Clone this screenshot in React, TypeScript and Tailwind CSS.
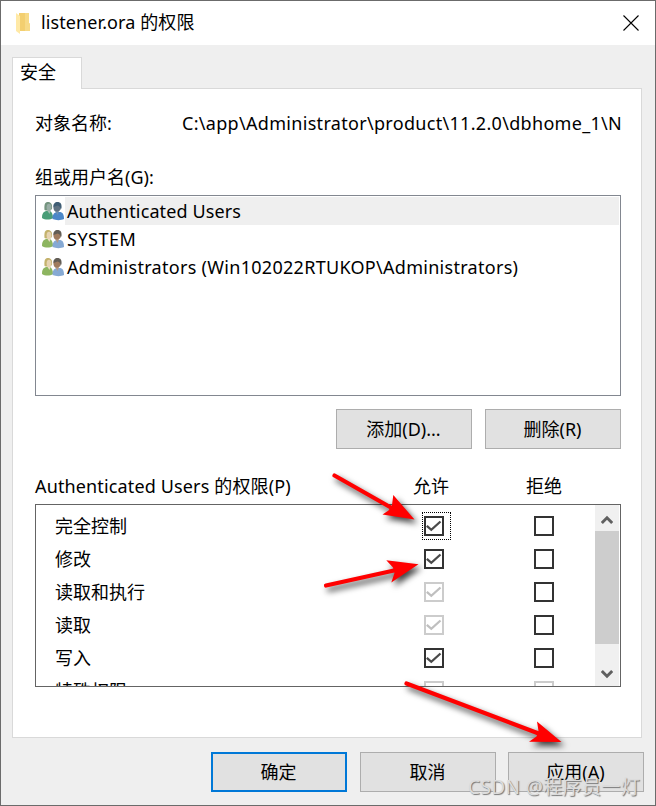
import { useState } from "react";

interface Permission {
  name: string;
  allow: boolean;
  inherited?: boolean;
  denyDisabled?: boolean;
}

const GROUPS = [
  { name: "Authenticated Users", spacing: "tracking-[0.12px]" },
  { name: "SYSTEM", spacing: "tracking-[0.5px]" },
  { name: "Administrators (Win102022RTUKOP\\Administrators)", spacing: "tracking-[0.29px]" },
];

const PERMISSIONS: Permission[] = [
  { name: "完全控制", allow: true },
  { name: "修改", allow: true },
  { name: "读取和执行", allow: true, inherited: true },
  { name: "读取", allow: true, inherited: true },
  { name: "写入", allow: true },
  { name: "特殊权限", allow: false, inherited: true, denyDisabled: true },
];

function FolderIcon() {
  return (
    <svg width="16" height="22" viewBox="0 0 16 22" className="shrink-0">
      <path d="M4 1h10v10l1 1v7H4z" fill="#f3cf70" />
      <path d="M10 1h4v10l1 1v7h-5z" fill="#f7da87" />
      <path d="M1 1l4 3v18l-4-3z" fill="#ffe9a6" />
    </svg>
  );
}

function UsersIcon({ selected }: { selected?: boolean }) {
  return (
    <svg width="22" height="20" viewBox="0 0 22 20" className="shrink-0">
      <path d="M0 17c0-4 1-6 4-7h4c2 1 3 4 3 7-3 2-8 2-11 0z" fill={selected ? "#4a9d78" : "#8db560"} />
      <path d="M2.500 9C2 3 3 1 6 1s4.500 2 4 7l-2 1.500H4z" fill={selected ? "#74947f" : "#c4b26c"} />
      <ellipse cx="7" cy="6.500" rx="2.400" ry="3.700" fill={selected ? "#9aaea6" : "#e6d3b2"} />
      <path d="M5.500 10h3l-1 3z" fill={selected ? "#a4bdb0" : "#ecdfc4"} />
      <path d="M10.500 18c0-4 1-6 4-7h4c3 1 3.500 4 3.500 7-3 1.500-8 1.500-11.500 0z" fill={selected ? "#4a87c8" : "#86a9d3"} />
      <ellipse cx="15" cy="6.500" rx="3.600" ry="4.700" fill={selected ? "#5f7282" : "#a07b5e"} />
      <path d="M11.500 6C11 3 13 1 15.500 1c3 0 4.500 2 4 6l-1 2c0-3-1-4-3-4.500z" fill={selected ? "#3f5d74" : "#625d55"} />
      <path d="M13.500 10.500h3.500l-1.500 3.500z" fill={selected ? "#6e91b0" : "#b59a86"} />
    </svg>
  );
}

interface CheckProps {
  checked: boolean;
  disabled?: boolean;
  focused?: boolean;
  onToggle: () => void;
}

function Check({ checked, disabled, focused, onToggle }: CheckProps) {
  return (
    <button
      type="button"
      role="checkbox"
      aria-checked={checked}
      disabled={disabled}
      onClick={onToggle}
      className={
        disabled
          ? "relative block h-5 w-5 border-2 border-[#cccccc] bg-white text-[#bfbfbf]"
          : "relative block h-5 w-5 border-2 border-[#333333] bg-white text-[#4a4a4a]"
      }
    >
      {checked && (
        <svg width="16" height="16" viewBox="0 0 16 16" fill="none" stroke="currentColor" strokeWidth="2.300">
          <path d="M0.800 7.800L5.300 11.800L14.500 3.500" />
        </svg>
      )}
      {focused && <span className="absolute -top-[6px] -left-1 h-7 w-[29px] border border-dotted border-black" />}
    </button>
  );
}

function DialogButton({ label, primary }: { label: string; primary?: boolean }) {
  return (
    <button
      type="button"
      className={
        primary
          ? "h-10 w-[136px] border-2 border-[#0078d7] bg-[#e1e1e1] pr-px"
          : "h-10 w-[136px] border border-[#adadad] bg-[#e1e1e1] pr-px"
      }
    >
      {label}
    </button>
  );
}

function Chevron({ up }: { up?: boolean }) {
  return (
    <svg width="12" height="10" viewBox="0 0 12 10" fill="none" stroke="#606060" strokeWidth="3">
      <path d={up ? "M0.800 8L6 2.800L11.200 8" : "M0.800 2L6 7.200L11.200 2"} />
    </svg>
  );
}

function Arrows() {
  return (
    <svg width="656" height="806" viewBox="0 0 656 806" className="pointer-events-none absolute -top-px -left-px drop-shadow-[3px_4px_3px_rgba(0,0,0,0.75)]">
      <g stroke="#ff0000" strokeWidth="4.200" strokeLinecap="round">
        <path d="M334.500 475.500L390 507" />
        <path d="M326 585.500L394 570.500" />
        <path d="M406.500 683.500L540 734" />
      </g>
      <g fill="#ff0000">
        <path d="M414.500 519.500L393.300 495L392 505L388.500 510.500L382.500 514.500Z" />
        <path d="M418.500 564.300L386.300 560.300L393 567.500L394.500 573L391.300 582.500Z" />
        <path d="M561.500 742L537 721.500L538.500 731L536.500 736.500L529 741.700Z" />
      </g>
    </svg>
  );
}

export default function App() {
  const [permissions, setPermissions] = useState(PERMISSIONS);
  const [denied, setDenied] = useState<string[]>([]);

  function toggleAllow(name: string) {
    setPermissions((list) => list.map((p) => (p.name === name ? { ...p, allow: !p.allow } : p)));
  }

  function toggleDeny(name: string) {
    setDenied((list) => (list.includes(name) ? list.filter((n) => n !== name) : [...list, name]));
  }

  return (
    <div className="relative flex h-[806px] w-[656px] flex-col overflow-hidden border border-[#6b6b6b] bg-[#efefef] font-['Noto_Sans','Noto_Sans_CJK_SC',sans-serif] text-[18px] leading-7 font-normal text-black">
      <header className="flex h-11 shrink-0 items-center bg-white pr-4 pl-[14px]">
        <FolderIcon />
        <h1 className="ml-[10px] flex-1 pb-[2px] tracking-[0.1px] whitespace-pre">listener.ora 的权限</h1>
        <button type="button" aria-label="关闭" className="pb-px">
          <svg width="16" height="16" viewBox="0 0 16 16" stroke="#000000" strokeWidth="1.100">
            <path d="M0.500 0.500L15.500 15.500M15.500 0.500L0.500 15.500" />
          </svg>
        </button>
      </header>

      <main className="flex flex-col px-[11px] pt-3">
        <div className="z-10 -mb-px h-8 w-[70px] border border-b-0 border-[#d9d9d9] bg-white pl-[7px] leading-[29px]">安全</div>

        <section className="flex h-[650px] w-[630px] flex-col border border-[#d9d9d9] bg-white px-[22px] pt-5">
          <div className="flex whitespace-pre">
            <span className="w-[147px] shrink-0">对象名称:</span>
            <span className="tracking-[0.31px]">{"C:\\app\\Administrator\\product\\11.2.0\\dbhome_1\\N"}</span>
          </div>

          <div className="mt-[26px]">组或用户名(G):</div>
          <ul className="mt-1 h-[201px] w-[586px] border border-[#828790] pt-px pr-px pl-[6px]">
            {GROUPS.map((group, i) => (
              <li key={group.name} className="flex h-7 items-center">
                <UsersIcon selected={i === 0} />
                <span className={i === 0 ? "ml-px flex-1 bg-[#efefef] pl-[2px]" : "ml-px flex-1 pl-[2px]"}>
                  <span className={group.spacing}>{group.name}</span>
                </span>
              </li>
            ))}
          </ul>

          <div className="mt-[13px] flex w-[586px] justify-end gap-[13px]">
            <DialogButton label="添加(D)..." />
            <DialogButton label="删除(R)" />
          </div>

          <div className="mt-[23px] flex">
            <span className="w-[378px] tracking-[0.14px] whitespace-pre">Authenticated Users 的权限(P)</span>
            <span className="w-[113px]">允许</span>
            <span>拒绝</span>
          </div>

          <div className="mt-1 flex h-[183px] w-[586px] overflow-hidden border border-[#646464] pr-px">
            <div className="flex-1 pt-1">
              {permissions.map((p, i) => (
                <div key={p.name} className="flex h-[33px] items-center pl-[19px]">
                  <span className="w-[369px]">{p.name}</span>
                  <span className="w-[110px]">
                    <Check checked={p.allow} disabled={p.inherited} focused={i === 0} onToggle={() => toggleAllow(p.name)} />
                  </span>
                  <Check checked={denied.includes(p.name)} disabled={p.denyDisabled} onToggle={() => toggleDeny(p.name)} />
                </div>
              ))}
            </div>
            <div className="flex w-6 flex-col bg-[#f0f0f0]">
              <div className="flex h-[26px] items-center justify-center pt-1">
                <Chevron up />
              </div>
              <div className="h-[113px] bg-[#cdcdcd]" />
              <div className="flex flex-1 items-center justify-center pt-[17px]">
                <Chevron />
              </div>
            </div>
          </div>
        </section>
      </main>

      <footer className="mt-[14px] flex pl-[210px]">
        <DialogButton label="确定" primary />
        <span className="w-[13px]" />
        <DialogButton label="取消" />
        <span className="w-3" />
        <DialogButton label="应用(A)" />
      </footer>

      <Arrows />
      <div className="absolute top-[772px] left-[467px] text-[19px] tracking-[0.4px] whitespace-pre text-[#dcdcdc] [text-shadow:1px_1px_1px_#777777]">
        CSDN @程序员一灯
      </div>

      {/* sliver of the desktop showing past the window's left edge */}
      <div className="absolute -top-px -left-px h-[806px] w-px bg-[linear-gradient(#6b6b6b_2px,#2b6a9c_2px_15px,#6b6b6b_15px_56px,#3c2340_56px_71px,#6b6b6b_71px_96px,#557f76_96px_102px,#6b6b6b_102px_117px,#8f7562_117px_124px,#636b4d_124px_130px,#6b6b6b_130px_144px,#8f7562_144px_152px,#5c8274_152px_158px,#6b6b6b_158px_277px,#6e2027_277px_283px,#6b6b6b_283px_345px,#25223f_345px_353px,#6b6b6b_353px)]" />
    </div>
  );
}
